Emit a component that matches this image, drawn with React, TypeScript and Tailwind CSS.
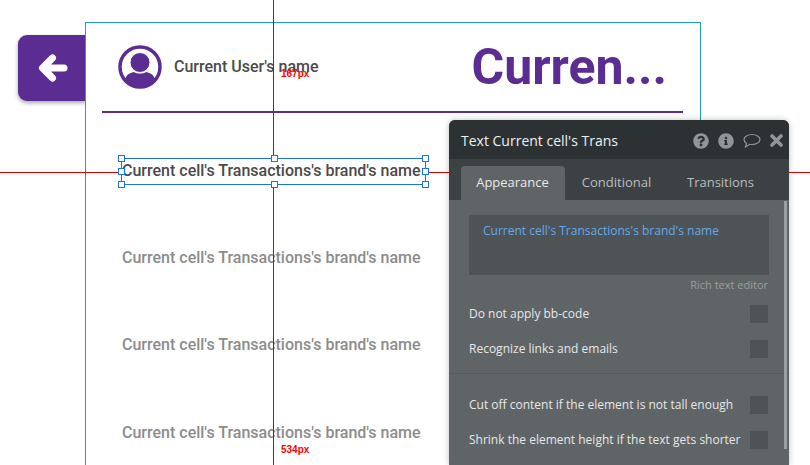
import { FaQuestionCircle, FaInfoCircle } from "react-icons/fa";

const rows = ["Current cell's Transactions's brand's name", "Current cell's Transactions's brand's name", "Current cell's Transactions's brand's name"];

function Handle({ className }: { className: string }) {
  return <span className={`absolute w-[7px] h-[7px] bg-white border border-[#1a73e8] ${className}`} />;
}

function CheckRow({ label, className = "" }: { label: string; className?: string }) {
  return (
    <div className={`flex items-center justify-between h-[18px] pr-[1px] ${className}`}>
      <span className="text-[12px] text-[#e6e8e8] whitespace-nowrap">{label}</span>
      <span className="w-[18px] h-[18px] bg-[#4e5356]" />
    </div>
  );
}

function PropertyEditor() {
  return (
    <div className="absolute z-30 left-[449px] top-[120px] w-[340px] h-[345px] rounded-t-[6px] bg-[#5f6467] shadow-[0_0_6px_rgba(0,0,0,0.25)] font-['Open_Sans',sans-serif] overflow-hidden">
      <div className="h-[39px] bg-[#2c3234] flex items-center justify-between pl-[12px] pr-[6px] pt-[2px]">
        <span className="text-[14px] text-[#eef0f0]">Text Current cell's Trans</span>
        <div className="flex items-center gap-[9px] text-[#8f9698]">
          <FaQuestionCircle size={16} />
          <FaInfoCircle size={16} />
          <svg width="18" height="16" viewBox="0 0 18 16" fill="none" stroke="currentColor" strokeWidth="1.200">
            <path d="M9 1.500c4.400 0 8 2.200 8 5s-3.600 5-8 5c-.8 0-1.500 0-2.200-.2L2.500 14l1-3.600C1.900 9.400 1 8 1 6.500c0-2.800 3.600-5 8-5z" />
          </svg>
          <svg width="13" height="13" viewBox="0 0 13 13" stroke="currentColor" strokeWidth="3.600" strokeLinecap="round">
            <path d="M2 2l9 9M11 2l-9 9" />
          </svg>
        </div>
      </div>
      <div className="h-[41px] bg-[#3c4244] flex items-end pl-[12px] text-[13px]">
        <div className="w-[104px] h-[34px] rounded-t-[4px] bg-[#5f6467] flex items-center justify-center pr-[1px] text-[#e8eaea]">Appearance</div>
        <div className="w-[105px] h-[34px] flex items-center justify-center pr-[2px] text-[#b9bdbe]">Conditional</div>
        <div className="w-[104px] h-[34px] flex items-center justify-center pr-[3px] text-[#b9bdbe]">Transitions</div>
      </div>
      <div className="relative pl-[20px] pr-[20px] pt-[15px]">
        <span className="absolute right-[2px] top-[1px] bottom-0 w-[3px] bg-[#9a9fa1]" />
        <div className="h-[60px] bg-[#4e5356] px-[14px] pt-[7px] text-[12px] text-[#63a9ec]">Current cell's Transactions's brand's name</div>
        <div className="mt-[2px] mb-[11px] text-right text-[11px] text-[#9a9fa2] pr-[1px]">Rich text editor</div>
        <CheckRow label="Do not apply bb-code" />
        <CheckRow label="Recognize links and emails" className="mt-[17px]" />
        <div className="h-px bg-[#565b5e] -mx-[20px] mt-[15px] mb-[22px]" />
        <CheckRow label="Cut off content if the element is not tall enough" />
        <CheckRow label="Shrink the element height if the text gets shorter" className="mt-[17px]" />
      </div>
    </div>
  );
}

export default function App() {
  return (
    <div className="relative w-[810px] h-[465px] overflow-hidden bg-white font-['Roboto',sans-serif]">
      {/* back button */}
      <div className="absolute left-[18px] top-[35px] w-[68px] h-[66px] rounded-l-[9px] bg-[#5b2d92] shadow-[0_2px_4px_rgba(0,0,0,0.35)] flex items-center pl-[19px]">
        <svg width="31" height="30" viewBox="0 0 31 30" fill="none" stroke="#fff" strokeWidth="7" strokeLinecap="round" strokeLinejoin="round">
          <path d="M27 15H6M15.500 5L5.500 15l10 10" />
        </svg>
      </div>

      {/* page */}
      <div className="absolute left-[85px] top-[22px] w-[616px] h-[460px] bg-white border border-[#1f9bcf]">
        <div className="ml-[16px] mr-[17px] h-[90px] border-b-2 border-[#5b2d92] flex items-center justify-between pl-[16px] pr-[16px] pb-[1px]">
          <div className="flex items-center gap-[12px]">
            <svg width="44" height="44" viewBox="0 0 44 44">
              <circle cx="22" cy="22" r="20" fill="#fff" stroke="#5b2d92" strokeWidth="3.500" />
              <path d="M7 35c1-5 4-7 9-8 3 2 9 2 12 0 5 1 8 3 9 8-4 5-9 7.500-15 7.500S11 40 7 35z" fill="#5b2d92" />
              <circle cx="22" cy="17.500" r="10" fill="#5b2d92" stroke="#fff" strokeWidth="1" />
            </svg>
            <span className="text-[16px] font-medium text-[#4a4a4a]">Current User's name</span>
          </div>
          <span className="text-[50px] leading-none font-bold text-[#5b2d92]">Curren...</span>
        </div>

        {/* selected text sits above the guides */}
        <div className="relative z-20 ml-[35px] mt-[45px] w-[305px] h-[27px] bg-white border border-[#1a73e8] flex items-center pb-[2px] text-[16px] font-medium text-[#4a4a4a] whitespace-nowrap">
          Current cell's Transactions's brand's name
          <Handle className="-left-[4px] -top-[4px]" />
          <Handle className="left-[149px] -top-[4px]" />
          <Handle className="-right-[4px] -top-[4px]" />
          <Handle className="-left-[4px] top-[9px]" />
          <Handle className="-right-[4px] top-[9px]" />
          <Handle className="-left-[4px] -bottom-[4px]" />
          <Handle className="left-[149px] -bottom-[4px]" />
          <Handle className="-right-[4px] -bottom-[4px]" />
        </div>

        <div className="ml-[36px] mt-[61px] flex flex-col gap-[63.4px]">
          {rows.map((r, i) => (
            <div key={i} className="text-[16px] font-medium text-[#8c8c8c] leading-[24px] whitespace-nowrap">{r}</div>
          ))}
        </div>
      </div>

      {/* guides */}
      <div className="absolute z-10 left-[273px] top-0 bottom-0 w-px bg-[#d80000]" />
      <div className="absolute z-10 left-0 right-0 top-[172px] h-px bg-[#e00000]" />
      <span className="absolute z-10 left-[281px] top-[68px] text-[10px] leading-[12px] font-bold text-[#f00] font-['Liberation_Sans',sans-serif]">167px</span>
      <span className="absolute z-10 left-[281px] top-[444px] text-[10px] leading-[12px] font-bold text-[#f00] font-['Liberation_Sans',sans-serif]">534px</span>

      <PropertyEditor />
    </div>
  );
}
